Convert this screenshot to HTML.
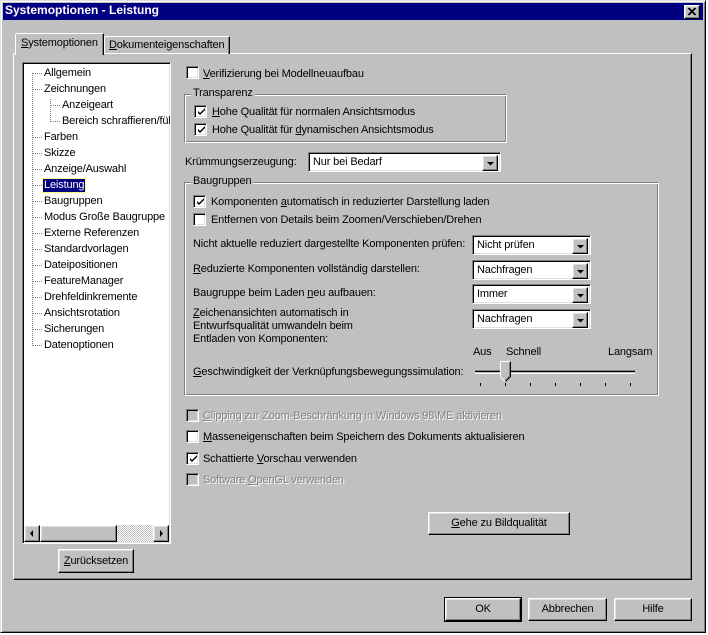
<!DOCTYPE html>
<html><head><meta charset="utf-8"><style>
*{margin:0;padding:0;box-sizing:border-box}
body{width:708px;height:635px;background:#fff;position:relative;overflow:hidden;font-family:"Liberation Sans",sans-serif;font-size:11px;letter-spacing:-0.15px;color:#000}
.a{position:absolute}
.t{position:absolute;white-space:nowrap;line-height:13px}
.win{left:0;top:0;width:706px;height:633px;background:#c0c0c0;border:1px solid;border-color:#dfdfdf #000 #000 #dfdfdf;box-shadow:inset 1px 1px #fff,inset -1px -1px #808080}
.raised{background:#c0c0c0;border:1px solid;border-color:#fff #000 #000 #fff;box-shadow:inset -1px -1px #808080,inset 1px 1px #dfdfdf}
.sunk{border:1px solid;border-color:#808080 #fff #fff #808080;box-shadow:inset 1px 1px #000,inset -1px -1px #dfdfdf}
.cb{position:absolute;width:13px;height:13px;background:#fff;border:1px solid;border-color:#808080 #fff #fff #808080;box-shadow:inset 1px 1px #000,inset -1px -1px #dfdfdf}
.cb.dis{background:#c0c0c0}
.cb svg{position:absolute;left:2px;top:2px}
.grp{position:absolute;border:1px solid;border-color:#808080 #fff #fff #808080;box-shadow:inset 1px 1px #fff,inset -1px -1px #808080}
.gl{position:absolute;background:#c0c0c0;padding:0 2px;line-height:13px}
.dis-t{color:#808080;text-shadow:1px 1px #fff}
.combo{position:absolute;height:20px;background:#fff}
.combo .v{position:absolute;left:4px;top:3px;white-space:nowrap}
.combo .b{position:absolute;right:2px;top:2px;width:16px;height:16px}
.btn{position:absolute;text-align:center;line-height:20px}
u{text-decoration:underline}
</style></head><body>
<div class="a win"></div>
<div class="a" style="left:3px;top:3px;width:700px;height:17px;background:#000080"></div>
<div class="t" style="left:5px;top:4px;color:#fff;font-weight:bold;font-size:12px;letter-spacing:0">Systemoptionen - Leistung</div>
<div class="a raised" style="left:684px;top:5px;width:16px;height:14px"><svg width="14" height="12" style="position:absolute;left:0;top:0"><path d="M3 2l7 7M4 2l7 7M10 2l-7 7M11 2l-7 7" stroke="#000" stroke-width="1"/></svg></div>

<div class="a" style="left:13px;top:53px;width:679px;height:527px;border:1px solid;border-color:#fff #000 #000 #fff;box-shadow:inset -1px -1px #808080"></div>
<div class="a" style="left:104px;top:36px;width:126px;height:18px;border:1px solid;border-bottom:none;border-color:#fff #000 #000 #fff;box-shadow:inset -1px 0 #808080;border-radius:2px 2px 0 0"></div>
<div class="t" style="left:109px;top:39px"><u>D</u>okumenteigenschaften</div>
<div class="a" style="left:15px;top:33px;width:89px;height:22px;background:#c0c0c0;border:1px solid;border-bottom:none;border-color:#fff #000 #000 #fff;box-shadow:inset -1px 0 #808080;border-radius:2px 2px 0 0"></div>
<div class="t" style="left:21px;top:37px"><u>S</u>ystemoptionen</div>

<div class="a sunk" style="left:22px;top:62px;width:149px;height:482px;background:#fff"></div>
<svg class="a" style="left:24px;top:66px" width="40" height="290">
<g stroke="#808080" stroke-dasharray="1 1">
<line x1="8.5" y1="7" x2="8.5" y2="280"/>
<line x1="26.5" y1="33" x2="26.5" y2="56"/>
<line x1="9" y1="7.5" x2="18" y2="7.5"/><line x1="9" y1="23.5" x2="18" y2="23.5"/>
<line x1="27" y1="39.5" x2="36" y2="39.5"/><line x1="27" y1="55.5" x2="36" y2="55.5"/>
<line x1="9" y1="71.5" x2="18" y2="71.5"/><line x1="9" y1="87.5" x2="18" y2="87.5"/>
<line x1="9" y1="103.5" x2="18" y2="103.5"/><line x1="9" y1="119.5" x2="18" y2="119.5"/>
<line x1="9" y1="135.5" x2="18" y2="135.5"/><line x1="9" y1="151.5" x2="18" y2="151.5"/>
<line x1="9" y1="167.5" x2="18" y2="167.5"/><line x1="9" y1="183.5" x2="18" y2="183.5"/>
<line x1="9" y1="199.5" x2="18" y2="199.5"/><line x1="9" y1="215.5" x2="18" y2="215.5"/>
<line x1="9" y1="231.5" x2="18" y2="231.5"/><line x1="9" y1="247.5" x2="18" y2="247.5"/>
<line x1="9" y1="263.5" x2="18" y2="263.5"/><line x1="9" y1="279.5" x2="18" y2="279.5"/>
</g></svg>
<div class="a" style="left:24px;top:66px;width:146px;height:300px;overflow:hidden">
<div class="t" style="left:20px;top:1px">Allgemein</div>
<div class="t" style="left:20px;top:17px">Zeichnungen</div>
<div class="t" style="left:38px;top:33px">Anzeigeart</div>
<div class="t" style="left:38px;top:49px">Bereich schraffieren/füllen</div>
<div class="t" style="left:20px;top:65px">Farben</div>
<div class="t" style="left:20px;top:81px">Skizze</div>
<div class="t" style="left:20px;top:97px">Anzeige/Auswahl</div>
<div class="t" style="left:19px;top:113px;background:#000080;color:#fff;padding:0 1px;outline:1px dotted #ff0">Leistung</div>
<div class="t" style="left:20px;top:129px">Baugruppen</div>
<div class="t" style="left:20px;top:145px">Modus Große Baugruppe</div>
<div class="t" style="left:20px;top:161px">Externe Referenzen</div>
<div class="t" style="left:20px;top:177px">Standardvorlagen</div>
<div class="t" style="left:20px;top:193px">Dateipositionen</div>
<div class="t" style="left:20px;top:209px">FeatureManager</div>
<div class="t" style="left:20px;top:225px">Drehfeldinkremente</div>
<div class="t" style="left:20px;top:241px">Ansichtsrotation</div>
<div class="t" style="left:20px;top:257px">Sicherungen</div>
<div class="t" style="left:20px;top:273px">Datenoptionen</div>
</div>
<div class="a" style="left:24px;top:525px;width:145px;height:17px;background:#c0c0c0"></div>
<div class="a" style="left:117px;top:525px;width:36px;height:17px;background:repeating-conic-gradient(#fff 0 25%,#c0c0c0 0 50%) 0 0/2px 2px"></div>
<div class="a raised" style="left:24px;top:525px;width:16px;height:17px"><svg width="14" height="15"><path d="M8 4v7L5 7.5z" fill="#000"/></svg></div>
<div class="a raised" style="left:40px;top:525px;width:77px;height:17px"></div>
<div class="a raised" style="left:153px;top:525px;width:16px;height:17px"><svg width="14" height="15"><path d="M6 4v7l3-3.5z" fill="#000"/></svg></div>
<div class="btn raised" style="left:58px;top:549px;width:76px;height:24px;line-height:22px"><u>Z</u>urücksetzen</div>

<div class="cb" style="left:186px;top:66px"></div>
<div class="t" style="left:203px;top:68px"><u>V</u>erifizierung bei Modellneuaufbau</div>

<div class="grp" style="left:184px;top:94px;width:323px;height:49px"></div>
<div class="gl" style="left:191px;top:87px">Transparenz</div>
<div class="cb" style="left:194px;top:105px"><svg width="9" height="9"><path d="M1 3l2 2 5-5v2l-5 5-2-2z" fill="#000"/></svg></div>
<div class="t" style="left:212px;top:106px"><u>H</u>ohe Qualität für normalen Ansichtsmodus</div>
<div class="cb" style="left:194px;top:123px"><svg width="9" height="9"><path d="M1 3l2 2 5-5v2l-5 5-2-2z" fill="#000"/></svg></div>
<div class="t" style="left:212px;top:124px">Hohe Qualität für <u>d</u>ynamischen Ansichtsmodus</div>

<div class="t" style="left:185px;top:156px">Krümmungserzeugung:</div>
<div class="combo sunk" style="left:308px;top:152px;width:193px"><div class="v">Nur bei Bedarf</div><div class="b raised"><svg width="14" height="14"><path d="M4 6h7l-3.5 3.5z" fill="#000"/></svg></div></div>

<div class="grp" style="left:184px;top:182px;width:475px;height:214px"></div>
<div class="gl" style="left:191px;top:175px">Baugruppen</div>
<div class="cb" style="left:193px;top:195px"><svg width="9" height="9"><path d="M1 3l2 2 5-5v2l-5 5-2-2z" fill="#000"/></svg></div>
<div class="t" style="left:211px;top:196px">Komponenten <u>a</u>utomatisch in reduzierter Darstellung laden</div>
<div class="cb" style="left:193px;top:213px"></div>
<div class="t" style="left:211px;top:214px">Entfernen von Details beim Zoomen/Verschieben/Drehen</div>

<div class="t" style="left:193px;top:238px">Nicht aktuelle reduziert dargestellte Komponenten prüfen:</div>
<div class="t" style="left:193px;top:263px"><u>R</u>eduzierte Komponenten vollständig darstellen:</div>
<div class="t" style="left:193px;top:287px">Baugruppe beim Laden <u>n</u>eu aufbauen:</div>
<div class="t" style="left:193px;top:307px"><u>Z</u>eichenansichten automatisch in</div>
<div class="t" style="left:193px;top:320px">Entwurfsqualität umwandeln beim</div>
<div class="t" style="left:193px;top:333px">Entladen von Komponenten:</div>
<div class="t" style="left:193px;top:366px"><u>G</u>eschwindigkeit der Verknüpfungsbewegungssimulation:</div>

<div class="combo sunk" style="left:472px;top:235px;width:119px"><div class="v">Nicht prüfen</div><div class="b raised"><svg width="14" height="14"><path d="M4 6h7l-3.5 3.5z" fill="#000"/></svg></div></div>
<div class="combo sunk" style="left:472px;top:260px;width:119px"><div class="v">Nachfragen</div><div class="b raised"><svg width="14" height="14"><path d="M4 6h7l-3.5 3.5z" fill="#000"/></svg></div></div>
<div class="combo sunk" style="left:472px;top:284px;width:119px"><div class="v">Immer</div><div class="b raised"><svg width="14" height="14"><path d="M4 6h7l-3.5 3.5z" fill="#000"/></svg></div></div>
<div class="combo sunk" style="left:472px;top:309px;width:119px"><div class="v">Nachfragen</div><div class="b raised"><svg width="14" height="14"><path d="M4 6h7l-3.5 3.5z" fill="#000"/></svg></div></div>

<div class="t" style="left:473px;top:346px">Aus</div>
<div class="t" style="left:506px;top:346px">Schnell</div>
<div class="t" style="left:608px;top:346px">Langsam</div>
<svg class="a" style="left:470px;top:358px" width="170" height="32">
<line x1="5" y1="12.5" x2="165" y2="12.5" stroke="#808080"/>
<line x1="5" y1="13.5" x2="165" y2="13.5" stroke="#000"/>
<line x1="5" y1="15.5" x2="165" y2="15.5" stroke="#fff"/>
<path d="M31 4h9v14l-4.5 5-4.5-5z" fill="#c0c0c0"/>
<path d="M30.5 19V3.5h10" fill="none" stroke="#fff"/>
<path d="M40.5 3.5V18.5l-5 5" fill="none" stroke="#000"/>
<path d="M39.5 4.5V18l-4 4" fill="none" stroke="#808080"/>
<path d="M30.5 19l4.5 4.5" stroke="#fff"/>
<g stroke="#000"><line x1="10.5" y1="25" x2="10.5" y2="28"/><line x1="35.5" y1="25" x2="35.5" y2="28"/><line x1="60.5" y1="25" x2="60.5" y2="28"/><line x1="85.5" y1="25" x2="85.5" y2="28"/><line x1="110.5" y1="25" x2="110.5" y2="28"/><line x1="135.5" y1="25" x2="135.5" y2="28"/><line x1="160.5" y1="25" x2="160.5" y2="28"/></g>
</svg>

<div class="cb dis" style="left:186px;top:409px"></div>
<div class="t dis-t" style="left:203px;top:410px"><u>C</u>lipping zur Zoom-Beschränkung in Windows 98\ME aktivieren</div>
<div class="cb" style="left:186px;top:430px"></div>
<div class="t" style="left:203px;top:431px"><u>M</u>asseneigenschaften beim Speichern des Dokuments aktualisieren</div>
<div class="cb" style="left:186px;top:452px"><svg width="9" height="9"><path d="M1 3l2 2 5-5v2l-5 5-2-2z" fill="#000"/></svg></div>
<div class="t" style="left:203px;top:453px">Schattierte <u>V</u>orschau verwenden</div>
<div class="cb dis" style="left:186px;top:473px"></div>
<div class="t dis-t" style="left:203px;top:474px">Software <u>O</u>penGL verwenden</div>

<div class="btn raised" style="left:428px;top:512px;width:142px;height:23px"><u>G</u>ehe zu Bildqualität</div>

<div class="btn" style="left:444px;top:597px;width:78px;height:25px;border:1px solid #000;"><div class="raised" style="width:100%;height:100%;line-height:21px">OK</div></div>
<div class="btn raised" style="left:528px;top:598px;width:79px;height:23px">Abbrechen</div>
<div class="btn raised" style="left:614px;top:598px;width:78px;height:23px">Hilfe</div>
</body></html>
